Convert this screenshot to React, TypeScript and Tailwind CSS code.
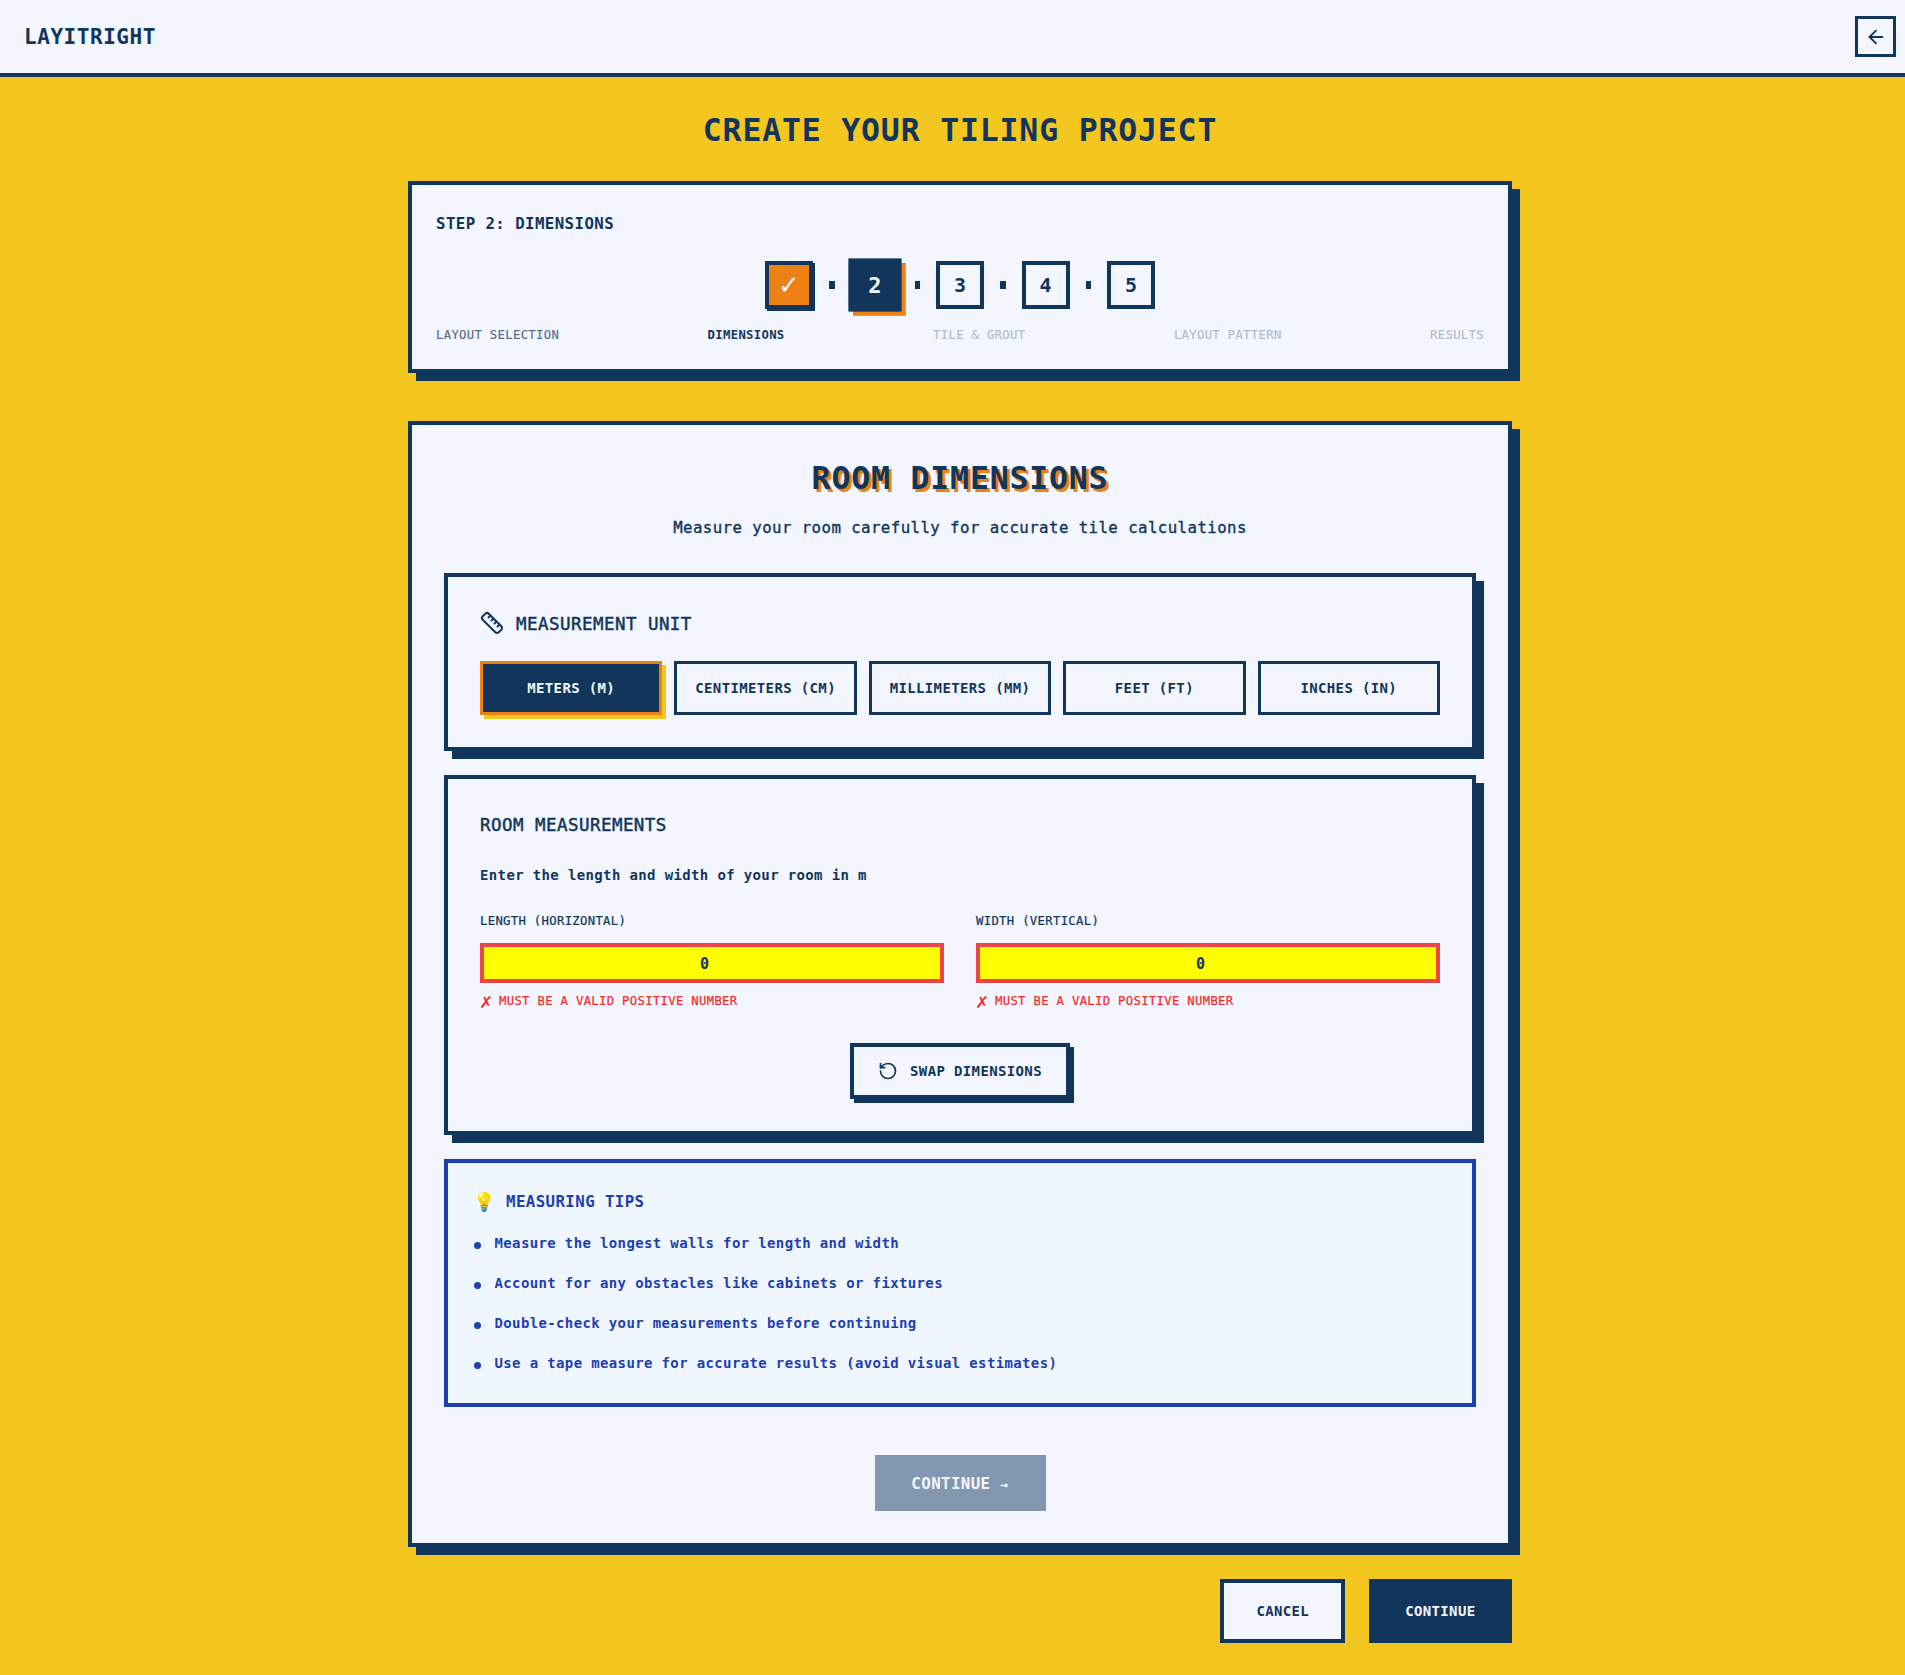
import { ArrowLeft, Ruler, RotateCcw } from 'lucide-react';

const units = ['METERS (M)', 'CENTIMETERS (CM)', 'MILLIMETERS (MM)', 'FEET (FT)', 'INCHES (IN)'];

const tips = [
  'Measure the longest walls for length and width',
  'Account for any obstacles like cabinets or fixtures',
  'Double-check your measurements before continuing',
  'Use a tape measure for accurate results (avoid visual estimates)',
];

function StepDot() {
  return <div className="w-[5.5px] h-2 bg-[#12355b]"></div>;
}

function Stepper() {
  return (
    <div className="flex items-center justify-center gap-4 mt-6">
      <div className="w-12 h-12 flex items-center justify-center bg-[#ed8114] border-4 border-[#12355b] shadow-[2px_2px_0_#12355b] text-[#f3f6ff] text-[26px] font-['DejaVu_Sans',sans-serif]">
        ✓
      </div>
      <StepDot />
      <div className="w-12 h-12 flex items-center justify-center bg-[#12355b] border-4 border-[#12355b] shadow-[4px_4px_0_#ed8114] scale-110 text-[#f3f6ff] text-[20px] font-bold">
        2
      </div>
      <StepDot />
      <div className="w-12 h-12 flex items-center justify-center border-4 border-[#12355b] text-[#12355b] text-[20px] font-bold">3</div>
      <StepDot />
      <div className="w-12 h-12 flex items-center justify-center border-4 border-[#12355b] text-[#12355b] text-[20px] font-bold">4</div>
      <StepDot />
      <div className="w-12 h-12 flex items-center justify-center border-4 border-[#12355b] text-[#12355b] text-[20px] font-bold">5</div>
    </div>
  );
}

function MeasureField({ label }: { label: string }) {
  return (
    <div>
      <label className="block text-[12.25px] leading-5 tracking-[0.026em] [-webkit-text-stroke:0.2px] mb-3">{label}</label>
      <input
        type="number"
        value="0"
        readOnly
        className="w-full h-10 pt-0.5 border-4 border-[#ef4444] bg-[#ffff00] text-center text-[15px] font-bold text-[#12355b] outline-none"
      />
      <p className="mt-2 flex items-center text-[12.25px] leading-5 tracking-[0.026em] [-webkit-text-stroke:0.2px] text-[#ef2b2b]">
        <span className="w-[19px] text-[20px] leading-5 [-webkit-text-stroke:0px]">✗</span>
        MUST BE A VALID POSITIVE NUMBER
      </p>
    </div>
  );
}

export default function App() {
  return (
    <div className="w-full overflow-hidden">
      <div className="w-[1920px] min-h-[1675px] bg-[#f4c620] text-[#12355b] font-['DejaVu_Sans_Mono',monospace]">
        <header className="h-[77px] flex items-center justify-between px-6 bg-[#f3f6ff] border-b-4 border-[#12355b]">
          <div className="text-[21px] leading-8 font-bold tracking-[0.026em]">LAYITRIGHT</div>
          <button className="w-[41px] h-[41px] flex items-center justify-center border-[3px] border-[#12355b]">
            <ArrowLeft className="w-[22px] h-[22px]" />
          </button>
        </header>

        <main className="max-w-6xl mx-auto px-6 pt-8 pb-8">
          <h1 className="text-[31.5px] leading-[42px] -mb-0.5 font-bold tracking-[0.026em] text-center">CREATE YOUR TILING PROJECT</h1>

          <section className="mt-8 px-6 py-6 bg-[#f3f6ff] border-4 border-[#12355b] shadow-[8px_8px_0_#12355b]">
            <h2 className="text-[15.75px] leading-[30px] -mb-0.5 font-bold tracking-[0.026em]">STEP 2: DIMENSIONS</h2>
            <Stepper />
            <div className="flex justify-between mt-4 text-[12.25px] leading-5 tracking-[0.026em] [-webkit-text-stroke:0.2px]">
              <span className="opacity-70">LAYOUT SELECTION</span>
              <span className="font-bold [-webkit-text-stroke:0px]">DIMENSIONS</span>
              <span className="opacity-30">TILE &amp; GROUT</span>
              <span className="opacity-30">LAYOUT PATTERN</span>
              <span className="opacity-30">RESULTS</span>
            </div>
          </section>

          <section className="mt-12 p-8 bg-[#f3f6ff] border-4 border-[#12355b] shadow-[8px_8px_0_#12355b]">
            <div className="text-center">
              <h2 className="text-[31.5px] leading-[42px] -mb-0.5 font-bold tracking-[0.026em] [text-shadow:3px_3px_0_#ed8114]">ROOM DIMENSIONS</h2>
              <p className="mt-4 text-[15.75px] leading-[30px] -mb-0.5 tracking-[0.026em] [-webkit-text-stroke:0.35px]">Measure your room carefully for accurate tile calculations</p>
            </div>

            <div className="mt-8 p-8 border-4 border-[#12355b] shadow-[8px_8px_0_#12355b]">
              <div className="flex items-center gap-3">
                <Ruler className="w-6 h-6" />
                <h3 className="text-[17.5px] leading-[30px] -mb-0.5 tracking-[0.026em] [-webkit-text-stroke:0.45px]">MEASUREMENT UNIT</h3>
              </div>
              <div className="grid grid-cols-5 gap-3 mt-6">
                {units.map((unit, index) => (
                  <button
                    key={unit}
                    className={
                      index === 0
                        ? 'py-3 text-[14px] leading-6 font-bold tracking-[0.026em] border-[3px] border-[#ed8114] bg-[#12355b] text-[#f3f6ff] shadow-[4px_4px_0_#f4c620]'
                        : 'py-3 text-[14px] leading-6 font-bold tracking-[0.026em] border-[3px] border-[#12355b]'
                    }
                  >
                    {unit}
                  </button>
                ))}
              </div>
            </div>

            <div className="mt-6 p-8 border-4 border-[#12355b] shadow-[8px_8px_0_#12355b]">
              <h3 className="text-[17.5px] leading-7 tracking-[0.026em] [-webkit-text-stroke:0.45px]">ROOM MEASUREMENTS</h3>
              <p className="mt-6 text-[14px] leading-6 font-bold tracking-[0.026em]">Enter the length and width of your room in m</p>
              <div className="grid grid-cols-2 gap-8 mt-6">
                <MeasureField label="LENGTH (HORIZONTAL)" />
                <MeasureField label="WIDTH (VERTICAL)" />
              </div>
              <div className="flex justify-center mt-8">
                <button className="flex items-center gap-3 py-3 px-6 text-[14px] leading-6 font-bold tracking-[0.026em] border-4 border-[#12355b] shadow-[4px_4px_0_#12355b]">
                  <RotateCcw className="w-5 h-5" />
                  SWAP DIMENSIONS
                </button>
              </div>
            </div>

            <div className="mt-6 p-6 pb-7 bg-[#eff6ff] border-4 border-[#1e40af] text-[#1e40af]">
              <h3 className="flex items-center gap-[10px] text-[15.75px] leading-[30px] -mb-0.5 font-bold tracking-[0.026em]">
                <span className="w-6 text-center text-[18px]">💡</span>
                MEASURING TIPS
              </h3>
              <ul className="mt-4 space-y-4">
                {tips.map((tip) => (
                  <li key={tip} className="flex items-center gap-[13px] text-[14px] leading-6 font-bold tracking-[0.026em]">
                    <span className="w-[7px] h-[7px] ml-[1.5px] mr-px rounded-full bg-[#1e40af] mt-1 shrink-0"></span>
                    {tip}
                  </li>
                ))}
              </ul>
            </div>

            <div className="flex justify-center mt-12">
              <button className="w-[171px] h-14 pt-0.5 text-[15.75px] font-bold tracking-[0.026em] text-[#f3f6ff] bg-[#8497b0]">
                CONTINUE <span className="text-[13px]">→</span>
              </button>
            </div>
          </section>

          <div className="flex justify-end gap-[23.5px] mt-8">
            <button className="py-4 px-8 text-[14px] leading-6 font-bold tracking-[0.026em] bg-[#f3f6ff] border-4 border-[#12355b]">CANCEL</button>
            <button className="py-4 px-[32.5px] text-[14px] leading-6 font-bold tracking-[0.026em] bg-[#12355b] border-4 border-[#12355b] text-[#f3f6ff]">CONTINUE</button>
          </div>
        </main>
      </div>
    </div>
  );
}
